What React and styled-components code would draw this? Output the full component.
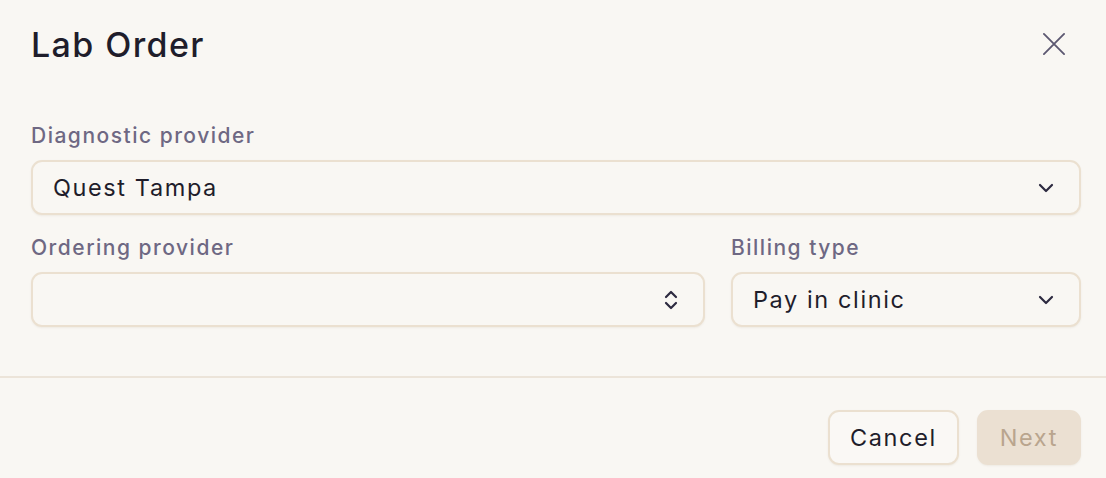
import React from 'react';
import styled, { createGlobalStyle } from 'styled-components';

const GlobalStyle = createGlobalStyle`
  html, body {
    margin: 0;
    padding: 0;
    background: #f9f7f3;
  }
  * { box-sizing: border-box; }
`;

const Dialog = styled.div`
  width: 1106px;
  height: 478px;
  background: #f9f7f3;
  font-family: Inter, "Open Sans", sans-serif;
  color: #1f1d2b;
  display: flex;
  flex-direction: column;
  overflow: hidden;
`;

const Header = styled.div`
  height: 88px;
  padding: 0 41px 0 31px;
  display: flex;
  align-items: center;
  justify-content: space-between;
`;

const Title = styled.h2`
  margin: 0;
  font-size: 34px;
  font-weight: 500;
  letter-spacing: 1.4px;
  color: #1f1d2b;
`;

const CloseButton = styled.button`
  border: none;
  background: none;
  padding: 0;
  width: 22px;
  height: 22px;
  display: flex;
  align-items: center;
  justify-content: center;
  color: #5c5871;
  cursor: pointer;
`;

const Body = styled.div`
  padding: 36px 25px 49px 31px;
  display: flex;
  flex-direction: column;
  gap: 21px;
  border-bottom: 2px solid #ece4d9;
`;

const Row = styled.div`
  display: grid;
  grid-template-columns: ${p => p.cols || '1fr'};
  gap: 26px;
`;

const Field = styled.div`
  display: flex;
  flex-direction: column;
  gap: 12px;
`;

const Label = styled.label`
  font-size: 21px;
  font-weight: 500;
  color: #6e6883;
  letter-spacing: 1.5px;
  line-height: 24px;
`;

const SelectBox = styled.div`
  height: 55px;
  border: 2px solid #ebe0d0;
  border-radius: 11px;
  background: #f9f7f3;
  box-shadow: 0 1px 2px rgba(120, 90, 50, 0.08);
  display: flex;
  align-items: center;
  justify-content: space-between;
  padding: 0 25px 0 20px;
  font-size: 23.5px;
  letter-spacing: 1.6px;
  color: #1f1d2b;
`;

const Footer = styled.div`
  display: flex;
  justify-content: flex-end;
  gap: 18px;
  padding: 32px 25px 0 31px;
`;

const Button = styled.button`
  height: 55px;
  padding: 0 ${p => (p.primary ? '21px' : '20px')};
  border-radius: 11px;
  border: 2px solid ${p => (p.primary ? '#ebe0d2' : '#ebe0d0')};
  background: ${p => (p.primary ? '#ebe0d2' : '#faf8f5')};
  color: ${p => (p.primary ? '#b9a58e' : '#1f1d2b')};
  font-family: Inter, "Open Sans", sans-serif;
  font-size: 23.5px;
  letter-spacing: 1.6px;
  box-shadow: 0 1px 2px rgba(120, 90, 50, 0.08);
  cursor: pointer;
`;

const Chevron = () => (
  <svg width="16" height="10" viewBox="0 0 16 10" fill="none" stroke="#2d2a40" strokeWidth="2.2" strokeLinecap="round" strokeLinejoin="round">
    <path d="M2 2l6 6 6-6" />
  </svg>
);

const UpDown = () => (
  <svg width="14" height="20" viewBox="0 0 14 20" fill="none" stroke="#2d2a40" strokeWidth="2.2" strokeLinecap="round" strokeLinejoin="round">
    <path d="M2 7l5-5 5 5" />
    <path d="M2 13l5 5 5-5" />
  </svg>
);

const CloseIcon = () => (
  <svg width="24" height="24" viewBox="0 0 24 24" fill="none" stroke="currentColor" strokeWidth="2" strokeLinecap="round">
    <path d="M1 1l22 22M23 1L1 23" />
  </svg>
);

export default function App() {
  return (
    <>
      <GlobalStyle />
      <Dialog>
        <Header>
          <Title>Lab Order</Title>
          <CloseButton aria-label="Close"><CloseIcon /></CloseButton>
        </Header>
        <Body>
          <Row>
            <Field>
              <Label>Diagnostic provider</Label>
              <SelectBox>
                <span>Quest Tampa</span>
                <Chevron />
              </SelectBox>
            </Field>
          </Row>
          <Row cols="674px 1fr">
            <Field>
              <Label>Ordering provider</Label>
              <SelectBox>
                <span />
                <UpDown />
              </SelectBox>
            </Field>
            <Field>
              <Label>Billing type</Label>
              <SelectBox>
                <span>Pay in clinic</span>
                <Chevron />
              </SelectBox>
            </Field>
          </Row>
        </Body>
        <Footer>
          <Button>Cancel</Button>
          <Button primary>Next</Button>
        </Footer>
      </Dialog>
    </>
  );
}
